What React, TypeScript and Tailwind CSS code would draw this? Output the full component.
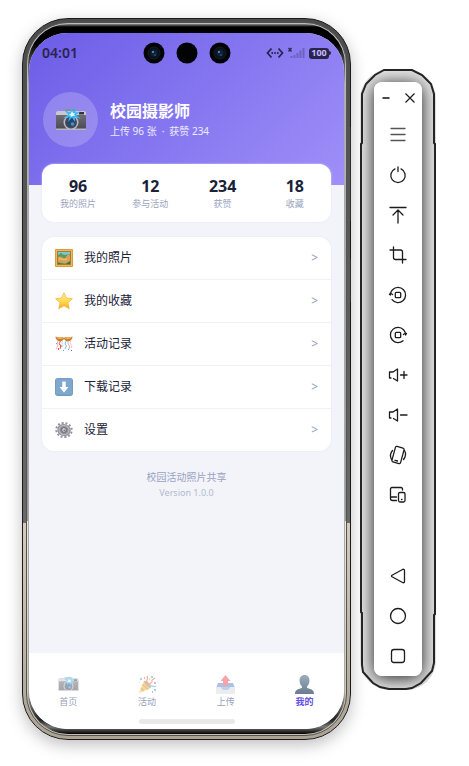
import type { ReactNode } from 'react';

const Camera = ({ className }: { className: string }) => (
  <svg viewBox="0 0 32 24" className={className} aria-hidden="true">
    <defs>
      <linearGradient id="cam" x1="0" y1="0" x2="0" y2="1">
        <stop offset="0" stopColor="#77747f" />
        <stop offset="1" stopColor="#4a4850" />
      </linearGradient>
    </defs>
    <rect x="1" y="3" width="30" height="19" rx="1.500" fill="url(#cam)" />
    <path d="M1 7V4.500Q1 3 2.500 3H29.500Q31 3 31 4.500V7Z" fill="#c9c7d0" />
    <path d="M9 3L11 1H20L22 3Z" fill="#8d8b95" />
    <rect x="24" y="4" width="5" height="2.500" fill="#34323c" />
    <rect x="1" y="20.500" width="30" height="1.500" fill="#b8b6bf" />
    <circle cx="16" cy="14.500" r="7.500" fill="#b9bcc8" />
    <circle cx="16" cy="14.500" r="6" fill="#454957" />
    <circle cx="16" cy="14.500" r="4" fill="#20476f" />
    <circle cx="17.500" cy="16" r="1.800" fill="#4d8fcc" />
    <path d="M17 -1L18 3.500L22 0L20 4.500L26 3.500L21 6.500L26 11L20 9L20 14L17 9.500L13 14L14.500 9L8 10L13.500 6.500L9 2L15 4.500Z" fill="#38b6f2" />
    <path d="M17 3L18 5L20 5L19 6.500L20 8L17.500 8L16 9L15.500 7.500L13.500 7L15.500 6Z" fill="#dcf7ff" />
  </svg>
);

const Picture = () => (
  <svg viewBox="0 0 18 18" className="size-[18px]" aria-hidden="true">
    <rect width="18" height="18" rx="1" fill="#d99b35" />
    <rect x="1" y="1" width="16" height="16" fill="#e8bb62" />
    <rect x="2" y="2" width="14" height="14" fill="#a87a35" />
    <rect x="3" y="3" width="12" height="12" fill="#76c9e3" />
    <path d="M3 6L6 4L9 6L15 5V15H3Z" fill="#5f9c4c" />
    <path d="M3 8C6 6 8 10 10 9C12 8 11 6 14 5L15 7V12C12 15 8 15 3 13Z" fill="#d9a05b" />
    <path d="M4 10C7 9 8 12 12 10" fill="none" stroke="#f1cd8c" />
    <path d="M3 14L9 15H3ZM11 15L15 12V15Z" fill="#39793c" />
  </svg>
);

const Star = () => (
  <svg viewBox="0 0 18 18" className="size-[18px]" aria-hidden="true">
    <defs>
      <linearGradient id="star" x1="0" y1="0" x2="0" y2="1">
        <stop offset="0" stopColor="#fff0a0" />
        <stop offset=".55" stopColor="#ffd84e" />
        <stop offset="1" stopColor="#f6aa20" />
      </linearGradient>
    </defs>
    <path d="M9 .7L11.500 6L17.400 6.700L13 10.700L14.300 16.700L9 13.800L3.700 16.700L5 10.700L.6 6.700L6.500 6Z" fill="url(#star)" stroke="#eeb13a" strokeWidth=".7" strokeLinejoin="round" />
  </svg>
);

const ConfettiBall = () => (
  <svg viewBox="0 0 18 18" className="size-[18px]" aria-hidden="true">
    <g fill="none" strokeWidth=".9">
      <path d="M3 6L2 9L3 11L1 14" stroke="#f0a3b9" />
      <path d="M5.500 6L4 9L6 11L5 14" stroke="#e24c42" />
      <path d="M7.500 6L7 8L8 10L7 12" stroke="#b5d9ee" />
      <path d="M11 6L10 9L11.500 11L10 14" stroke="#59b8d8" />
      <path d="M13 6L13 9L14.500 11L14 14" stroke="#f39bb9" />
      <path d="M16 5L15 8L17 11L16 13" stroke="#f2c3b8" />
    </g>
    <path d="M.5 1.500C.5 6.500 6.500 8 9 4C11.500 8 17.500 6.500 17.500 1.500C14 3.500 11 .5 9 3C7 .5 4 3.500 .5 1.500Z" fill="#c98035" />
    <path d="M1 1.500C4 3.500 7 1 9 3C11 1 14 3.500 17 1.500C15 5 11 4 9 3C7 4 3 5 1 1.500Z" fill="#efb963" />
    <path d="M5 9L7 11L5 13ZM3 13H4V15H3Z" fill="#ea5146" />
    <path d="M1 8H2V9H1ZM8 15H9V16H8ZM13 14H14V15H13Z" fill="#52a9df" />
    <path d="M16 15H17V16H16Z" fill="#5471c7" />
  </svg>
);

const Download = () => (
  <svg viewBox="0 0 18 18" className="size-[18px]" aria-hidden="true">
    <rect width="18" height="18" rx="3" fill="#6d97bd" />
    <rect x=".7" y=".5" width="16.600" height="16.300" rx="2.600" fill="#7fa8cc" />
    <path d="M7.300 3.500H10.700V9H13.500L9 14.500L4.500 9H7.300Z" fill="white" />
  </svg>
);

const Gear = () => (
  <svg viewBox="0 0 18 18" className="size-[18px]" aria-hidden="true">
    <g transform="rotate(12 9 9)">
      <ellipse cx="9" cy="9" rx="7.800" ry="7" fill="none" stroke="#929099" strokeWidth="2" strokeDasharray="2 1.850" />
      <ellipse cx="9" cy="9" rx="6.800" ry="6" fill="#94929c" />
      <ellipse cx="9" cy="9" rx="5" ry="4.500" fill="none" stroke="#bdbbc4" strokeWidth="1" />
      <ellipse cx="9" cy="9" rx="3.300" ry="3" fill="#7a7883" />
      <circle cx="9" cy="9" r="1.700" fill="#dddbe2" />
      <circle cx="9.400" cy="9.300" r=".9" fill="#777580" />
    </g>
  </svg>
);

const Popper = () => (
  <svg viewBox="0 0 19 19" className="size-[19px]" aria-hidden="true">
    <path d="M1 18L6 6C8 8 11 11 13 13Z" fill="#f4b333" />
    <path d="M3 13L6 16M4.500 9.500L10 14.500" stroke="#c88127" strokeWidth="1.200" />
    <path d="M6 6C9 5 14 10 13 13C10 13 6 9 6 6Z" fill="#bd8050" />
    <g fill="none" strokeWidth="1.200">
      <path d="M9 8C7 5 11 5 9 1" stroke="#ed5447" />
      <path d="M11 10C12 7 15 9 14 5L17 3" stroke="#ee5960" />
      <path d="M12 12C14 9 15 13 18 11" stroke="#48aed3" />
    </g>
    <path d="M2 3H4V5H2ZM13 1H15V3H13ZM16 14H18V16H16Z" fill="#4da7e5" />
    <path d="M6 2H7V4H6ZM16 7H18V9H16ZM14 16H15V18H14Z" fill="#ef615e" />
    <path d="M11 3H12V5H11ZM1 7H2V8H1Z" fill="#f5bc42" />
  </svg>
);

const Outbox = () => (
  <svg viewBox="0 0 19 19" className="size-[19px]" aria-hidden="true">
    <path d="M2 8H17L19 13V19H0V13Z" fill="#5a86c9" />
    <path d="M0 12H5C6 16 13 16 14 12H19V19H0Z" fill="#d9d9de" />
    <path d="M5 12H14C13 16 6 16 5 12Z" fill="#7ea5df" />
    <path d="M9.500 0L14.500 6H12V11H7V6H4.500Z" fill="#ec4c4c" />
  </svg>
);

const Person = () => (
  <svg viewBox="0 0 19 19" className="size-[19px]" aria-hidden="true">
    <defs>
      <linearGradient id="person" x1="0" y1="0" x2="0" y2="1">
        <stop offset="0" stopColor="#9badbf" />
        <stop offset="1" stopColor="#6c7c8f" />
      </linearGradient>
    </defs>
    <path d="M9.500 0C6 0 4.500 2.500 4.500 5.500C4.500 8 5.500 10 7 11.500V13C4 14 0 14 0 19H19C19 14 15 14 12 13V11.500C13.500 10 14.500 8 14.500 5.500C14.500 2.500 13 0 9.500 0Z" fill="url(#person)" />
  </svg>
);

const stats = [
  { value: '96', label: '我的照片' },
  { value: '12', label: '参与活动' },
  { value: '234', label: '获赞' },
  { value: '18', label: '收藏' },
];

const menu: { label: string; icon: ReactNode }[] = [
  { label: '我的照片', icon: <Picture /> },
  { label: '我的收藏', icon: <Star /> },
  { label: '活动记录', icon: <ConfettiBall /> },
  { label: '下载记录', icon: <Download /> },
  { label: '设置', icon: <Gear /> },
];

const tabs: { label: string; icon: ReactNode; active?: boolean }[] = [
  { label: '首页', icon: <Camera className="h-[17px] w-[21px]" /> },
  { label: '活动', icon: <Popper /> },
  { label: '上传', icon: <Outbox /> },
  { label: '我的', icon: <Person />, active: true },
];

const tools: { label: string; icon: ReactNode }[] = [
  { label: 'Menu', icon: <path d="M3 3.500H17M3 9.500H17M3 15.500H17" stroke="#555" /> },
  { label: 'Power', icon: <path d="M7 3.900A7.200 7.200 0 1 0 13 3.900M10 2V6.500" /> },
  { label: 'Swipe up', icon: <path d="M2 2.500H18M10 18V5.500M5 10L10 5L15 10" /> },
  { label: 'Crop', icon: <path d="M5.500 2V12.500Q5.500 14.500 7.500 14.500H18M2 5H12.500Q14.500 5 14.500 7V18" /> },
  {
    label: 'Rotate left',
    icon: <path d="M4.500 4.700A7.600 7.600 0 1 1 4 14.700M2.400 10V8L4.500 9.500M2.400 8L1.500 9.500M8.300 7.300H11.700Q12.700 7.300 12.700 8.300V11.700Q12.700 12.700 11.700 12.700H8.300Q7.300 12.700 7.300 11.700V8.300Q7.300 7.300 8.300 7.300ZM4.500 4.700Q2.800 6.300 2.400 9" />,
  },
  {
    label: 'Rotate right',
    icon: <path d="M15.500 4.700A7.600 7.600 0 1 0 15 15.700M17.600 10V8L15.500 9.500M17.600 10L18.500 8.500M8.300 7.300H11.700Q12.700 7.300 12.700 8.300V11.700Q12.700 12.700 11.700 12.700H8.300Q7.300 12.700 7.300 11.700V8.300Q7.300 7.300 8.300 7.300ZM15.500 4.700Q17.200 6.300 17.600 9" />,
  },
  { label: 'Volume up', icon: <path d="M3 13H1.500V7H5L9.500 4V16L5.500 13.500M12.500 10H19M16 6.500V13.500" /> },
  { label: 'Volume down', icon: <path d="M3 13H1.500V7H5L9.500 4V16L5.500 13.500M12.500 10H19" /> },
  {
    label: 'Shake',
    icon: (
      <>
        <rect x="5.500" y="2" width="9" height="16" rx="1.500" transform="rotate(15 10 10)" />
        <path d="M4.500 5.500Q1 9.500 3.500 14.500M16.500 5.500Q19 10 15.500 14.500M7 15.300L9.500 16" />
      </>
    ),
  },
  {
    label: 'Devices',
    icon: <path d="M14.500 5V4Q14.500 2.500 13 2.500H4Q2.500 2.500 2.500 4V13.500Q2.500 15.500 4.500 15.500H8.500M3 12H8.500M12 7.500H15.500Q17 7.500 17 9V15.500Q17 17 15.500 17H12Q10.500 17 10.500 15.500V9Q10.500 7.500 12 7.500ZM13.500 14.500H14" />,
  },
];

const navigation: { label: string; icon: ReactNode }[] = [
  { label: 'Back', icon: <path d="M4 9.200Q3 10 4 10.800L15 16.700Q16.500 17 16.500 15.500V4.500Q16.500 3 15 3.300Z" /> },
  { label: 'Home', icon: <circle cx="10" cy="10" r="7.500" /> },
  { label: 'Recent apps', icon: <rect x="3.500" y="3.500" width="13" height="13" rx="2.500" /> },
];

const ToolButton = ({ label, icon }: { label: string; icon: ReactNode }) => (
  <button type="button" aria-label={label} className="flex h-10 w-full items-center justify-center">
    <svg viewBox="0 0 20 20" className="size-5" fill="none" stroke="#1c1c1c" strokeWidth="1.300" strokeLinecap="round" strokeLinejoin="round">
      {icon}
    </svg>
  </button>
);

const Lens = ({ glass }: { glass: boolean }) => (
  <svg viewBox="0 0 22 22" className="size-[22px]" aria-hidden="true">
    <circle cx="11" cy="11" r="10.500" fill="#030305" />
    {glass && (
      <>
        <circle cx="11" cy="11" r="6" fill="#0b1019" stroke="#161b24" />
        <circle cx="11" cy="11" r="3.500" fill="#0d2239" />
        <circle cx="10" cy="10" r="1" fill="#5ea2da" />
        <circle cx="12" cy="13" r="1" fill="#284b7b" />
      </>
    )}
  </svg>
);

const StatusBar = () => (
  <div className="grid h-10 grid-cols-[1fr_auto_1fr] items-center px-[13px] text-[#29244c]">
    <span className="text-sm font-semibold">04:01</span>
    <div className="flex gap-[11px]">
      <Lens glass />
      <Lens glass={false} />
      <Lens glass />
    </div>
    <div className="flex items-center justify-end gap-1">
      <svg viewBox="0 0 18 12" className="h-3 w-[18px]" fill="none" stroke="currentColor" strokeWidth="1.800" aria-hidden="true">
        <path d="M5.500 1.500L1.500 6L5.500 10.500M12.500 1.500L16.500 6L12.500 10.500" />
        <path d="M5.500 6H13" strokeDasharray="1.500 1.300" />
      </svg>
      <svg viewBox="0 0 17 12" className="h-3 w-[17px]" fill="none" stroke="currentColor" aria-hidden="true">
        <path d="M.5 1L3.500 4.500M3.500 1L.5 4.500" strokeWidth="1.200" />
        <path d="M3.500 11V9M6.500 11V8M9.500 11V6M12.500 11V3.500M15.500 11V1" strokeWidth="2" opacity=".3" />
      </svg>
      <div className="flex items-center">
        <span className="flex h-[11px] w-5 items-center justify-center rounded-[3px] bg-[#29244c] text-[9px] font-bold text-[#c5bdff]">100</span>
        <span className="h-1 w-0.5 rounded-r-sm bg-[#29244c]" />
      </div>
    </div>
  </div>
);

const Screen = () => (
  <div className="flex flex-1 flex-col overflow-hidden rounded-[38px] bg-[#f3f4fa]">
    <header className="bg-linear-135 from-[#6c5ce7] to-[#a08ff8] pb-[38px] text-white">
      <StatusBar />
      <div className="flex items-center gap-3 px-3.5 pt-[19px]">
        <div className="flex size-[55px] items-center justify-center rounded-full bg-white/20">
          <Camera className="h-[26px] w-8" />
        </div>
        <div>
          <h1 className="text-[16px] leading-5 font-bold">校园摄影师</h1>
          <p className="flex gap-[5px] pt-0.5 text-[10px] leading-4 text-white/85">
            <span>上传 96 张</span>
            <span>·</span>
            <span>获赞 234</span>
          </p>
        </div>
      </div>
    </header>

    <main className="-mt-[21px] flex-1 px-[13px]">
      <dl className="grid grid-cols-4 rounded-xl bg-white pt-3 pb-2.5 text-center shadow-[0_0_2px_#dfe2f4]">
        {stats.map((s) => (
          <div key={s.label} className="flex flex-col-reverse">
            <dt className="text-[9px] leading-4 text-[#9aa4c0]">{s.label}</dt>
            <dd className="text-base leading-5 font-bold text-[#1b2238]">{s.value}</dd>
          </div>
        ))}
      </dl>

      <ul className="mt-[15px] divide-y divide-[#f1f2f8] rounded-xl bg-white shadow-[0_0_2px_#dfe2f4]">
        {menu.map((m) => (
          <li key={m.label}>
            <button type="button" className="flex h-[42px] w-full items-center gap-[11px] px-[13px] text-left text-xs text-[#1b2238]">
              {m.icon}
              <span className="flex-1">{m.label}</span>
              <span className="text-xs text-[#929bb9]">&gt;</span>
            </button>
          </li>
        ))}
      </ul>

      <footer className="pt-[18px] text-center text-[10px]">
        <p className="leading-4 text-[#98a3c0]">校园活动照片共享</p>
        <p className="text-[9px] leading-4 text-[#afb9cf]">Version 1.0.0</p>
      </footer>
    </main>

    <nav className="bg-white pt-[22px] pb-[5px]">
      <div className="grid grid-cols-4">
        {tabs.map((t) => (
          <button
            key={t.label}
            type="button"
            className={t.active ? 'flex flex-col items-center text-[9px] font-bold text-[#6250e5]' : 'flex flex-col items-center text-[9px] text-[#98a1bb]'}
          >
            <span className={t.active ? 'flex h-[19px] items-center' : 'flex h-[19px] items-center opacity-50'}>{t.icon}</span>
            <span className="leading-4">{t.label}</span>
          </button>
        ))}
      </div>
      <div className="mx-auto mt-[9px] h-[5px] w-24 rounded-full bg-[#e9e9e9]" />
    </nav>
  </div>
);

const Phone = () => (
  <section className="relative flex flex-1 rounded-[46px] border border-[#1b1b1b] bg-[linear-gradient(to_bottom,#4c4c4c_0,#696969_70%,#d3cbbd_70%,#aaa294_100%)] p-[3px] shadow-[0_5px_16px_rgba(0,0,0,0.25)]">
    <div className="flex flex-1 rounded-[42px] border border-[#55534f] bg-[linear-gradient(to_bottom,#bbb_0,#999_70%,#eee8dc_70%,#c4bdb0_100%)] p-px">
      <div className="flex flex-1 rounded-[40px] bg-[linear-gradient(to_bottom,#888_0,#000_3px,#000_20px,#aaa_60px,#aaa_94%,#222_98%,#777_99%,#000_100%)] px-px pt-[9px] pb-[5px]">
        <Screen />
      </div>
    </div>
    <span className="absolute top-[108px] -right-px h-[94px] w-px bg-[#303030]" />
    <span className="absolute top-[240px] -right-px h-[43px] w-px bg-[#303030]" />
  </section>
);

const Toolbar = () => (
  <aside className="relative mt-[51px] mb-[50px] flex w-[76px] px-3.5 pt-[13px] pb-3.5">
    <div className="absolute inset-0 overflow-hidden rounded-[30px] bg-[#e8e8e8] px-3.5 pt-[13px] pb-3.5">
      <div className="h-full rounded-lg shadow-[0_2px_18px_rgba(0,0,0,0.9)]" />
    </div>
    <svg viewBox="0 0 76 621" preserveAspectRatio="none" className="absolute inset-0 size-full overflow-visible" fill="none" stroke="#242424" strokeWidth="2" aria-hidden="true">
      <path d="M24 1H52L62 6L71 15L74 25V74L75 75V545L74 546V594L72 602L61 614L52 619L46 620H29L20 618L13 614L3 603L2 596V544L1 543V75L2 74V25L6 15L15 6Z" />
    </svg>
    <div className="relative flex flex-1 flex-col rounded-lg bg-white">
      <div className="mb-0.5 flex h-[31px] items-center justify-center gap-1 text-[#1c1c1c]">
        <button type="button" aria-label="Minimize" className="flex size-5 items-center justify-center">
          <svg viewBox="0 0 12 12" className="size-3" stroke="currentColor" strokeWidth="1.600"><path d="M2.500 6H9.500" /></svg>
        </button>
        <button type="button" aria-label="Close" className="flex size-5 items-center justify-center">
          <svg viewBox="0 0 12 12" className="size-3" stroke="currentColor" strokeWidth="1.200"><path d="M1.500 1.500L10.500 10.500M10.500 1.500L1.500 10.500" /></svg>
        </button>
      </div>
      {tools.map((t) => <ToolButton key={t.label} {...t} />)}
      <div className="mt-auto">
        {navigation.map((t) => <ToolButton key={t.label} {...t} />)}
      </div>
    </div>
  </aside>
);

export default function App() {
  return (
    <div className="flex min-h-screen gap-[9px] bg-white pt-[18px] pr-[33px] pb-[26px] pl-[22px] font-['Noto_Sans','Noto_Sans_CJK_SC',sans-serif]">
      <Phone />
      <Toolbar />
    </div>
  );
}
